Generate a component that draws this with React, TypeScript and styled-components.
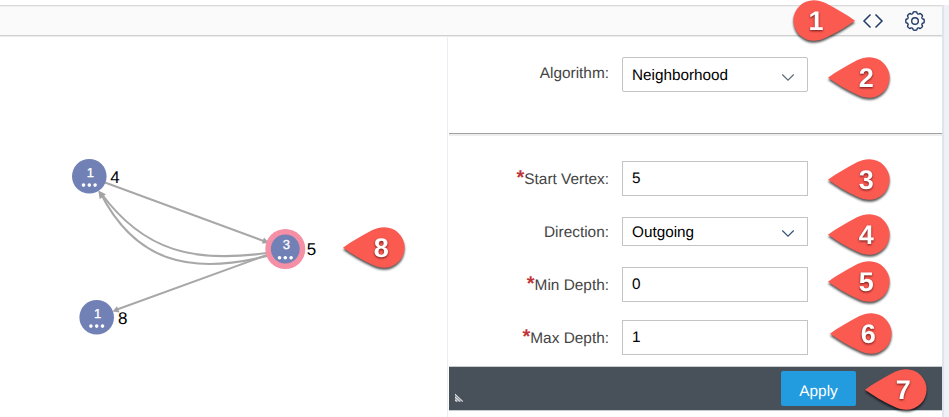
import React from "react";
import styled, { createGlobalStyle } from "styled-components";

const GlobalStyle = createGlobalStyle`
  * { box-sizing: border-box; }
  body {
    margin: 0;
    background: #fff;
    font-family: "Liberation Sans", Arial, sans-serif;
    text-rendering: geometricPrecision;
  }
`;

const Page = styled.div`
  position: relative;
  width: 949px;
  height: 417px;
  padding-top: 5px;
  overflow: hidden;
  display: flex;
  background: #fff;
`;

const Main = styled.div`
  width: 942px;
  display: flex;
  flex-direction: column;
`;

const Gutter = styled.div`
  flex: 1;
  background: #eef1f7;
  border-left: 2px solid #dfe4ed;
`;

const Toolbar = styled.header`
  height: 32px;
  flex: none;
  display: flex;
  align-items: center;
  justify-content: flex-end;
  gap: 20px;
  padding-right: 16px;
  background: #fafafa;
  border-top: 1px solid #d9d9d9;
  border-bottom: 1px solid #ececec;
  box-shadow: inset 0 -1px 0 #d0d0d0, inset 0 1px 0 #f0f0f0;
`;

const Workspace = styled.div`
  flex: 1;
  display: flex;
`;

const Graph = styled.svg`
  display: block;
  width: 447px;
  height: 380px;
  flex: none;
`;

const Panel = styled.aside`
  flex: 1;
  border-left: 1px solid #e9eef2;
  padding-left: 1px;
`;

const AlgorithmSection = styled.section`
  height: 97px;
  padding-top: 20px;
  border-bottom: 1px solid #a0a0a0;
  box-shadow: 0 2px 0 #eee;
`;

const ParameterSection = styled.section`
  height: 232px;
  padding-top: 27px;
`;

const Row = styled.div<{ $height: number; $gap?: number }>`
  height: ${(p) => p.$height}px;
  margin-bottom: ${(p) => p.$gap ?? 0}px;
  display: grid;
  grid-template-columns: 160px 186px;
  column-gap: 13px;
`;

const Label = styled.label<{ $top: number }>`
  padding-top: ${(p) => p.$top}px;
  text-align: right;
  font-size: 15.4px;
  line-height: 18px;
  color: #444;
  white-space: nowrap;
`;

const Required = styled.span`
  color: #c03438;
  font-size: 20px;
  font-weight: 700;
  line-height: 10px;
`;

const Control = styled.div<{ $round?: boolean; $top: number }>`
  display: flex;
  justify-content: space-between;
  align-items: flex-start;
  padding: ${(p) => p.$top}px 12px 0 9px;
  border: 1px solid #c4c4c4;
  border-radius: ${(p) => (p.$round ? 2 : 0)}px;
  background: #fff;
  color: #000;
  font-size: 15.3px;
  line-height: 18px;
`;

const ChevronIcon = styled.svg<{ $top: number }>`
  width: 14px;
  height: 9px;
  margin-top: ${(p) => p.$top}px;
`;

const Footer = styled.footer`
  height: 45px;
  display: flex;
  align-items: flex-start;
  justify-content: space-between;
  padding: 4px 86px 0 5px;
  background: #485059;
  border-top: 1px solid #c9cdd2;
  border-bottom: 1px solid #c5ccd4;
`;

const Grip = styled.svg`
  width: 10px;
  height: 10px;
  margin-top: 22px;
`;

const ApplyButton = styled.button`
  width: 75px;
  height: 35px;
  padding: 6px 0 0;
  border: 0;
  border-radius: 2px;
  background: #229bdf;
  color: #fff;
  font: 15.4px/18px "Liberation Sans", Arial, sans-serif;
  text-rendering: geometricPrecision;
`;

const Callout = styled.svg<{ $x: number; $y: number }>`
  position: absolute;
  left: ${(p) => p.$x}px;
  top: ${(p) => p.$y}px;
  width: 62px;
  height: 41px;
  overflow: visible;
  filter: drop-shadow(0.3px 2.5px 1.3px rgba(0, 0, 0, 0.68));
`;

const CalloutDigit = styled.text`
  font: 700 27px "Liberation Sans", Arial, sans-serif;
  fill: #fff;
  text-anchor: middle;
  filter: drop-shadow(0.5px 1.5px 1px rgba(60, 0, 0, 0.75));
`;

const NodeCount = styled.text`
  font: 13px "Liberation Sans", Arial, sans-serif;
  fill: #fff;
  stroke: #fff;
  stroke-width: 0.3px;
  text-anchor: middle;
`;

const NodeName = styled.text`
  font: 17px "Liberation Sans", Arial, sans-serif;
  fill: #000;
`;

function Chevron({ top, color }: { top: number; color: string }) {
  return (
    <ChevronIcon $top={top} viewBox="0 0 14 9">
      <path d="M1.3 1.5 7 7.2l5.7-5.7" fill="none" stroke={color} strokeWidth="1.2" />
    </ChevronIcon>
  );
}

function Pin({ x, y, digit, right }: { x: number; y: number; digit: number; right?: boolean }) {
  return (
    <Callout $x={x} $y={y} viewBox="0 0 62 41">
      <path
        transform={right ? "matrix(-1 0 0 1 62 0)" : undefined}
        d="M0 20.7C8 15.2 18 9 29.5 3.1 33 1.3 37.3.2 41.3.2a20.3 20.3 0 0 1 0 40.6c-4 0-8.2-1.2-12-3C18 32.5 8 26.5 0 20.7Z"
        fill="#fb5a51"
      />
      <CalloutDigit x={right ? 23 : 38.2} y={30.3}>{digit}</CalloutDigit>
    </Callout>
  );
}

function Vertex({ x, y, count, name, nameX, selected }: {
  x: number; y: number; count: number; name: string; nameX: number; selected?: boolean;
}) {
  return (
    <g>
      {selected && <circle cx={x} cy={y} r="20" fill="#f48fa5" />}
      <circle cx={x} cy={y} r={selected ? 14.4 : 17.3} fill="#7181b6" />
      <NodeCount x={x + 1} y={y + 0.2}>{count}</NodeCount>
      {[-5.8, 0, 5.8].map((dx) => (
        <circle key={dx} cx={x + dx} cy={y + 8.8} r="1.8" fill="#fff" />
      ))}
      <NodeName x={nameX} y={y + 6.3}>{name}</NodeName>
    </g>
  );
}

const gearPath = Array.from({ length: 160 }, (_, i) => {
  const a = (i / 160) * Math.PI * 2;
  const r = 8.4 + 0.8 * Math.tanh(3 * (Math.cos(a * 8) + 0.35));
  return `${i ? "L" : "M"}${(11 + r * Math.cos(a)).toFixed(2)} ${(11 + r * Math.sin(a)).toFixed(2)}`;
}).join("") + "Z";

const pins = [
  { x: 828.2, y: 56.5, digit: 2 },
  { x: 828.2, y: 158.7, digit: 3 },
  { x: 828.2, y: 214, digit: 4 },
  { x: 828.2, y: 261, digit: 5 },
  { x: 830.2, y: 312.8, digit: 6 },
  { x: 864.7, y: 368.8, digit: 7 },
  { x: 343.3, y: 226.8, digit: 8 },
];

export default function App() {
  return (
    <Page>
      <GlobalStyle />
      <Main>
        <Toolbar>
          <svg width="22" height="16" viewBox="0 0 22 16" fill="none" stroke="#223a68" strokeWidth="1.5">
            <path d="M8.5 1.5 2 8l6.5 6.5M13.5 1.5 20 8l-6.5 6.5" />
          </svg>
          <svg width="22" height="22" viewBox="0 0 22 22" fill="none" stroke="#223a68" strokeWidth="1.4" strokeLinejoin="round">
            <path d={gearPath} />
            <circle cx="11" cy="11" r="3.3" />
          </svg>
        </Toolbar>
        <Workspace>
          <Graph viewBox="0 37 447 380">
            <g fill="none" stroke="#a8a8a8" strokeWidth="2.1">
              <path d="M105 182.5 265 241.5" />
              <path d="M267 255 117 309.5" />
              <path d="M267 253C195 263 144 252 101 193" />
              <path d="M267 256C188 276 135 260 101 194" />
            </g>
            <g fill="#a3a3a3">
              <path d="m269.5 243.2-7.700.2 2.200-6Z" />
              <path d="m112.5 311.5 4.500-5.300 2.600 6.300Z" />
              <path d="m98.3 190.5 7.600 3.800-6.200 5Z" />
            </g>
            <Vertex x={89.3} y={176.3} count={1} name="4" nameX={110.2} />
            <Vertex x={96.7} y={317.3} count={1} name="8" nameX={118} />
            <Vertex x={285.3} y={249} count={3} name="5" nameX={306.8} selected />
          </Graph>
          <Panel>
            <AlgorithmSection>
              <Row $height={35}>
                <Label $top={8}>Algorithm:</Label>
                <Control $round $top={9}>Neighborhood<Chevron top={6} color="#596b79" /></Control>
              </Row>
            </AlgorithmSection>
            <ParameterSection>
              <Row $height={35} $gap={21}>
                <Label $top={10}><Required>*</Required>Start Vertex:</Label>
                <Control $top={8}>5</Control>
              </Row>
              <Row $height={29} $gap={21}>
                <Label $top={7}>Direction:</Label>
                <Control $top={6}>Outgoing<Chevron top={5} color="#345273" /></Control>
              </Row>
              <Row $height={35} $gap={18}>
                <Label $top={10}><Required>*</Required>Min Depth:</Label>
                <Control $top={8}>0</Control>
              </Row>
              <Row $height={35}>
                <Label $top={10}><Required>*</Required>Max Depth:</Label>
                <Control $top={8}>1</Control>
              </Row>
            </ParameterSection>
            <Footer>
              <Grip viewBox="0 0 10 10">
                <path d="M1 1v7.5h8Z" fill="#9ba0a5" />
                <path d="m1 1 8 7.5M1 4l5 4.500M1 7l2 1.500" stroke="#e9ebed" strokeWidth="1" />
              </Grip>
              <ApplyButton>Apply</ApplyButton>
            </Footer>
          </Panel>
        </Workspace>
      </Main>
      <Gutter />
      <Pin x={793} y={0.2} digit={1} right />
      {pins.map((pin) => <Pin key={pin.digit} {...pin} />)}
    </Page>
  );
}
